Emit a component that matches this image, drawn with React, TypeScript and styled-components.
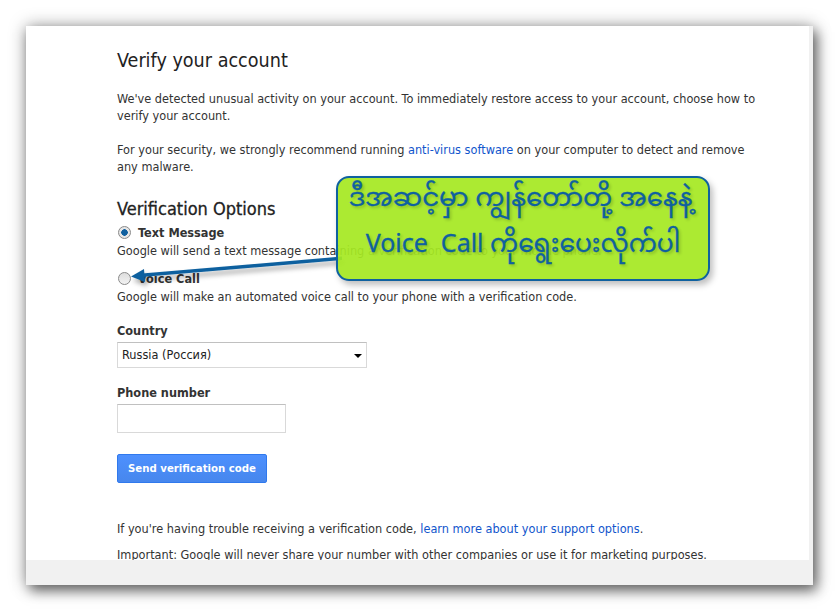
import styled, { createGlobalStyle } from 'styled-components'

const Global = createGlobalStyle`
  html, body { margin: 0; padding: 0; background: #fff; }
  body { font-family: "DejaVu Sans Condensed", "DejaVu Sans", Verdana, sans-serif; color: #333; }
`

export default function App() {
  return (
    <Stage>
      <Global />
      <Window>
        <Scroller>
          <Content>
            <Title>Verify your account</Title>
            <Para>We've detected unusual activity on your account. To immediately restore access to your account, choose how to verify your account.</Para>
            <Para>For your security, we strongly recommend running <A>anti-virus software</A> on your computer to detect and remove any malware.</Para>
            <Heading>Verification Options</Heading>
            <Option>
              <Radio $checked />
              <OptionName>Text Message</OptionName>
            </Option>
            <OptionHint>Google will send a text message containing a verification code to your mobile phone.</OptionHint>
            <Option>
              <Radio />
              <OptionName>Voice Call</OptionName>
            </Option>
            <OptionHint>Google will make an automated voice call to your phone with a verification code.</OptionHint>
            <Label>Country</Label>
            <Select>
              Russia (Россия)
              <Caret />
            </Select>
            <Label>Phone number</Label>
            <PhoneInput />
            <SendButton>Send verification code</SendButton>
            <Foot>If you're having trouble receiving a verification code, <A>learn more about your support options</A>.</Foot>
            <Foot>Important: Google will never share your number with other companies or use it for marketing purposes.</Foot>
          </Content>
        </Scroller>
        <BottomStrip />
      </Window>
      <Arrow width="230" height="40" viewBox="0 0 230 40">
        <defs>
          <filter id="arrowShadow" x="-10%" y="-50%" width="120%" height="250%">
            <feDropShadow dx="2" dy="4" stdDeviation="2.5" floodColor="#000" floodOpacity="0.35" />
          </filter>
        </defs>
        <g filter="url(#arrowShadow)" fill="#0f619f">
          <path d="M20 17.5 L220 0.5 L220 4 L20 21 Z" />
          <path d="M9 20.5 L22 13 L23 26 Z" />
        </g>
      </Arrow>
      <Callout>
        <CalloutLine $size={26} $inset={5}>ဒီအဆင့်မှာ ကျွန်တော်တို့ အနေနဲ့</CalloutLine>
        <CalloutLine $size={25}>Voice  Call ကိုရွေးပေးလိုက်ပါ</CalloutLine>
      </Callout>
    </Stage>
  )
}

const Stage = styled.div`
  position: relative;
  width: 839px;
  height: 611px;
  padding: 26px;
  box-sizing: border-box;
  overflow: hidden;
`
const Window = styled.div`
  width: 787px;
  height: 559px;
  display: flex;
  flex-direction: column;
  background: #f1f1f1;
  box-shadow: 0 0 16px rgba(0,0,0,.35), 4px 6px 12px rgba(0,0,0,.5);
`
const Scroller = styled.div`
  height: 534px;
  width: 783px;
  background: #fff;
  overflow: hidden;
`
const BottomStrip = styled.div`
  height: 25px;
  background: #f1f1f1;
`
const Content = styled.div`
  width: 645px;
  margin-left: 91px;
  padding-top: 21px;
  font-size: 12.6px;
  line-height: 17px;
`
const Title = styled.h1`
  margin: 0 0 15px;
  font-size: 19.6px;
  line-height: 28px;
  font-weight: 400;
  color: #222;
`
const Para = styled.p`
  margin: 0 0 17px;
`
const A = styled.a`
  color: #15c;
`
const Heading = styled.h2`
  margin: 22px 0 2px;
  font-size: 18px;
  line-height: 24px;
  font-weight: 400;
  color: #222;
  -webkit-text-stroke: 0.3px #222;
`
const Option = styled.div`
  display: flex;
  align-items: center;
  height: 19px;
`
const Radio = styled.span<{ $checked?: boolean }>`
  width: 13px;
  height: 13px;
  margin-left: 1px;
  margin-right: 7px;
  box-sizing: border-box;
  border-radius: 50%;
  border: 1px solid #8a8a8a;
  background: ${p => p.$checked
    ? 'radial-gradient(circle, #0f5f9f 0 3px, #e6e6e6 3.5px)'
    : 'linear-gradient(#ddd, #f2f2f2)'};
`
const OptionName = styled.span`
  font-weight: 700;
  color: #333;
`
const OptionHint = styled.div`
  height: 17px;
  margin-bottom: 10px;
`
const Label = styled.div`
  margin-top: 17px;
  height: 18px;
  font-weight: 700;
  color: #333;
  & + div + & { margin-top: 16px; }
`
const Select = styled.div`
  position: relative;
  width: 250px;
  height: 26px;
  box-sizing: border-box;
  margin-top: 2px;
  padding: 3px 0 0 4px;
  border: 1px solid #d9d9d9;
  border-top-color: #c0c0c0;
  color: #222;
`
const Caret = styled.span`
  position: absolute;
  right: 4px;
  top: 11px;
  border-left: 4px solid transparent;
  border-right: 4px solid transparent;
  border-top: 4px solid #000;
`
const PhoneInput = styled.div`
  width: 169px;
  height: 29px;
  box-sizing: border-box;
  margin-top: 2px;
  border: 1px solid #d9d9d9;
  border-top-color: #c0c0c0;
`
const SendButton = styled.button`
  display: block;
  width: 150px;
  height: 29px;
  margin: 21px 0 37px;
  padding: 0;
  border: 1px solid #3079ed;
  border-radius: 2px;
  background: linear-gradient(#4d90fe, #4787ed);
  color: #fff;
  font: 700 11.3px "DejaVu Sans Condensed", "DejaVu Sans", Verdana, sans-serif;
`
const Foot = styled.p`
  margin: 0 0 9px;
`
const Arrow = styled.svg`
  position: absolute;
  left: 122px;
  top: 256px;
`
const Callout = styled.div`
  position: absolute;
  left: 336px;
  top: 176px;
  width: 374px;
  height: 105px;
  box-sizing: border-box;
  padding-bottom: 10px;
  border: 2px solid #0f619f;
  border-radius: 13px;
  background: rgba(166, 232, 34, .93);
  box-shadow: 3px 4px 6px rgba(0,0,0,.25);
  display: flex;
  flex-direction: column;
  align-items: center;
  justify-content: center;
  gap: 5px;
`
const CalloutLine = styled.div<{ $size: number; $inset?: number }>`
  font-size: ${p => p.$size}px;
  line-height: 42px;
  padding-right: ${p => p.$inset ?? 0}px;
  color: #0f619f;
  white-space: pre;
  font-family: "Noto Sans Myanmar", "Padauk", "DejaVu Sans", sans-serif;
  -webkit-text-stroke: 0.3px #0f619f;
  text-shadow: 2px 2px 3px rgba(0,0,0,.2);
`
